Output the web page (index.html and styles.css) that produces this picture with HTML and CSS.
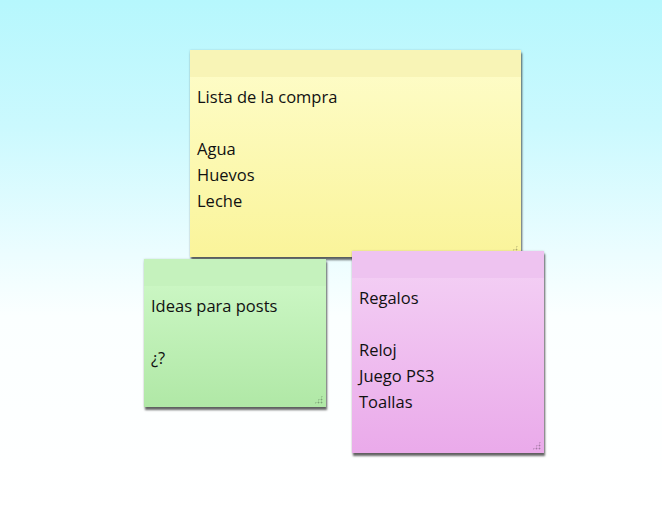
FILE: index.html
```html
<!DOCTYPE html>
<html>
<head>
    <meta charset="UTF-8">
    <title>Notas</title>
    <link rel="stylesheet" href="styles.css">
</head>
<body>
    <div class="desktop">
        <div class="note yellow">
            <div class="bar"></div>
            <div class="text">
                <p>Lista de la compra</p>
                <p>&nbsp;</p>
                <p>Agua</p>
                <p>Huevos</p>
                <p>Leche</p>
            </div>
            <span class="grip"></span>
        </div>
        <div class="note green">
            <div class="bar"></div>
            <div class="text">
                <p>Ideas para posts</p>
                <p>&nbsp;</p>
                <p>¿?</p>
            </div>
            <span class="grip"></span>
        </div>
        <div class="note pink">
            <div class="bar"></div>
            <div class="text">
                <p>Regalos</p>
                <p>&nbsp;</p>
                <p>Reloj</p>
                <p>Juego PS3</p>
                <p>Toallas</p>
            </div>
            <span class="grip"></span>
        </div>
    </div>
</body>
</html>
```
FILE: styles.css
```css
*{
    padding: 0;
    margin: 0;
}
body{
    width: 662px;
    height: 509px;
    overflow: hidden;
}
.desktop{
    position: relative;
    width: 662px;
    height: 509px;
    background: linear-gradient(#b6f7fd 0%, #cbf9fe 25%, #ecfdff 50%, #fbffff 62%, #ffffff 100%);
}
.note{
    position: absolute;
    box-shadow: 1px 3px 2px rgba(0,0,0,0.6), 0 0 2px rgba(0,0,0,0.15);
    font-family: "Open Sans", sans-serif;
    font-size: 16.5px;
    color: #111;
}
.bar{
    height: 27px;
}
.text{
    padding: 7px 7px 6px;
}
.text p{
    line-height: 26px;
    white-space: nowrap;
}
.grip{
    position: absolute;
    right: 3px;
    bottom: 3px;
    width: 9px;
    height: 9px;
    background:
        radial-gradient(circle, rgba(0,0,0,0.3) 0.8px, transparent 1.1px) 0 0 / 3px 3px;
    clip-path: polygon(100% 0, 100% 100%, 0 100%);
}
.yellow{
    left: 190px;
    top: 50px;
    width: 331px;
    height: 207px;
    background: linear-gradient(#fefdcb, #faf49a);
}
.yellow .bar{
    background: #f8f4b6;
}
.green{
    left: 144px;
    top: 259px;
    width: 182px;
    height: 148px;
    z-index: 1;
    background: linear-gradient(#d0f9c9, #b0e8a6);
}
.green .bar{
    background: #c5f2bd;
}
.pink{
    left: 352px;
    top: 251px;
    width: 192px;
    height: 202px;
    z-index: 2;
    background: linear-gradient(#f4d2f5, #eaaaea);
}
.pink .bar{
    background: #eec3f0;
}
```
